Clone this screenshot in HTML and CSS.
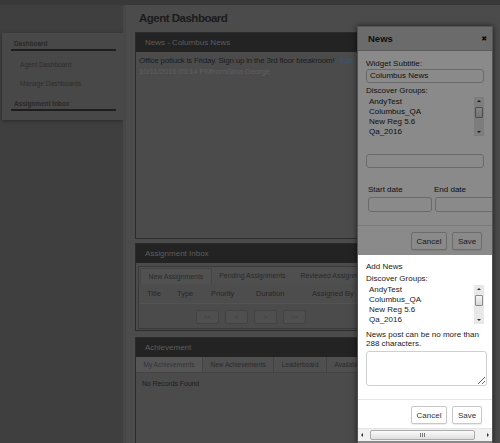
FILE: index.html
```html
<!DOCTYPE html>
<html lang="en">
<head>
  <meta charset="UTF-8" />
  <title>Agent Dashboard</title>
  <link rel="stylesheet" href="styles.css">
</head>
<body>

  <div class="topbar"></div>

  <div class="layout">
    <!-- side menu -->
    <aside class="sidebar">
      <div class="side-heading">Dashboard</div>
      <a class="side-link">Agent Dashboard</a>
      <a class="side-link">Manage Dashboards</a>
      <div class="side-heading">Assignment Inbox</div>
    </aside>

    <!-- dashboard widgets -->
    <main class="main">
      <h1 class="page-title">Agent Dashboard</h1>

      <div class="widget">
        <div class="widget-head">News - Columbus News</div>
        <div class="widget-body news-body">
          <div class="news-line">
            <span>Office potluck is Friday. Sign up in the 3rd floor breakroom!</span>
            <a class="news-edit">Edit</a>
          </div>
          <div class="news-meta">10/11/2016 03:14 PMfromGina George</div>
        </div>
      </div>

      <div class="widget widget-inbox">
        <div class="widget-head">Assignment Inbox</div>
        <div class="widget-body inbox-body">
          <div class="inbox-panel">
            <div class="tabs tabs-inbox">
              <span class="tab is-active">New Assignments</span>
              <span class="tab">Pending Assignments</span>
              <span class="tab">Reviewed Assignments</span>
            </div>
            <div class="table-head">
              <span>Title</span>
              <span>Type</span>
              <span>Priority</span>
              <span>Duration</span>
              <span>Assigned By</span>
            </div>
            <div class="pager">
              <button class="pager-btn">&lt;&lt;</button>
              <button class="pager-btn">&lt;</button>
              <button class="pager-btn">&gt;</button>
              <button class="pager-btn">&gt;&gt;</button>
            </div>
          </div>
        </div>
      </div>

      <div class="widget widget-achv">
        <div class="widget-head">Achievement</div>
        <div class="widget-body achv-body">
          <div class="tabs tabs-achv">
            <span class="tab is-active">My Achievements</span>
            <span class="tab">New Achievements</span>
            <span class="tab">Leaderboard</span>
            <span class="tab">Available Achievements</span>
          </div>
          <p class="empty">No Records Found</p>
        </div>
      </div>
    </main>
  </div>

  <!-- tour overlay dims everything except the focused part -->
  <div class="tour-overlay"></div>

  <!-- News widget settings dialog -->
  <div class="modal">
    <div class="modal-head">
      <span class="modal-title">News</span>
      <span class="modal-close">&#x2716;</span>
    </div>

    <div class="modal-section">
      <div class="field-label">Widget Subtitle:</div>
      <div class="field-input">Columbus News</div>
      <div class="field-label gap-top">Discover Groups:</div>
      <div class="listbox">
        <div>AndyTest</div>
        <div>Columbus_QA</div>
        <div>New Reg 5.6</div>
        <div>Qa_2016</div>
        <div class="vscroll"><i class="up"></i><b class="thumb"></b><i class="down"></i></div>
      </div>
      <div class="field-input blank"></div>
      <div class="date-row">
        <div>
          <div class="field-label">Start date</div>
          <div class="date-input"></div>
        </div>
        <div>
          <div class="field-label">End date</div>
          <div class="date-input"></div>
        </div>
      </div>
    </div>
    <div class="modal-foot">
      <button class="btn btn-cancel">Cancel</button>
      <button class="btn btn-save">Save</button>
    </div>

    <div class="tour-focus">
      <div class="modal-section add-section">
        <div class="field-label">Add News</div>
        <div class="field-label gap-small">Discover Groups:</div>
        <div class="listbox">
          <div>AndyTest</div>
          <div>Columbus_QA</div>
          <div>New Reg 5.6</div>
          <div>Qa_2016</div>
          <div class="vscroll"><i class="up"></i><b class="thumb"></b><i class="down"></i></div>
        </div>
        <p class="note">News post can be no more than 288 characters.</p>
        <textarea class="news-text"></textarea>
      </div>
      <div class="modal-foot">
        <button class="btn btn-cancel">Cancel</button>
        <button class="btn btn-save">Save</button>
      </div>
      <div class="hscroll">
        <i class="left"></i>
        <b class="hthumb"><span class="grip"></span></b>
        <i class="right"></i>
      </div>
    </div>
  </div>

</body>
</html>
```

FILE: styles.css
```css
/* ======= base ======= */
* {
  box-sizing: border-box;
  margin: 0;
  padding: 0;
}
html, body {
  height: 100%;
  overflow: hidden;
}
body {
  font-family: "Liberation Sans", Arial, sans-serif;
  font-size: 8px;
  background: #757575;
  color: #383838;
}
.topbar {
  height: 5px;
  background: #6a6a6a;
}
.layout {
  display: flex;
  align-items: flex-start;
  height: 438px;
}

/* ======= side menu ======= */
.sidebar {
  width: 121px;
  margin: 28px 0 0 2px;
  padding: 6px 7px 9px 9px;
  background: #858585;
  box-shadow: 0 1px 4px rgba(0,0,0,0.35);
}
.side-heading {
  font-size: 6.4px;
  font-weight: bold;
  line-height: 10px;
  padding-left: 3px;
  color: #4e4e4e;
  border-bottom: 2px solid #383838;
}
.side-link {
  display: block;
  padding: 9px 0 0 9px;
  font-size: 6.6px;
  line-height: 10px;
  color: #555;
}
.side-link + .side-heading {
  margin-top: 10px;
}

/* ======= main area ======= */
.main {
  flex: 1;
  align-self: stretch;
  background: #8b8b8b;
  border-left: 3px solid #838383;
  padding-left: 9px;
}
.page-title {
  margin: 6px 0 7px 4px;
  font-size: 11.5px;
  line-height: 14px;
  letter-spacing: -0.5px;
  color: #343434;
}
.widget {
  width: 232px;
  border: 1px solid #505050;
}
.widget-head {
  height: 19px;
  line-height: 19px;
  padding-left: 9px;
  background: #414141;
  color: #a8a8a8;
  font-size: 8px;
}
.widget-body {
  background: #8b8b8b;
}
.news-body {
  height: 186px;
  padding: 3px 13px 0 3px;
  line-height: 11px;
  letter-spacing: -0.2px;
}
.news-line {
  display: flex;
  justify-content: space-between;
  color: #383838;
}
.news-edit {
  color: #6f9cc6;
}
.news-meta {
  color: #ababab;
}

.widget-inbox {
  margin-top: 4px;
}
.inbox-body {
  padding: 3px 2px 1px;
}
.inbox-panel {
  border: 1px solid #6c6c6c;
}
.tabs {
  display: flex;
  white-space: nowrap;
  overflow: hidden;
  background: #929292;
  color: #4e4e4e;
}
.tabs-inbox {
  height: 17px;
  line-height: 17px;
  padding-left: 1px;
  font-size: 6.9px;
}
.tabs-inbox .tab {
  padding: 0 7.5px;
}
.tabs-inbox .is-active {
  background: #979797;
  border: 1px solid #7e7e7e;
  border-bottom: none;
  line-height: 16px;
  margin-top: 1px;
}
.table-head {
  display: grid;
  grid-template-columns: 30px 34px 45px 56px auto;
  height: 20px;
  line-height: 19px;
  padding-left: 8px;
  font-size: 7.5px;
  color: #4a4a4a;
  border-bottom: 1px solid #9a9a9a;
  background: #8f8f8f;
}
.pager {
  display: flex;
  justify-content: center;
  gap: 6px;
  height: 24px;
  padding-top: 6px;
}
.pager-btn {
  width: 23px;
  height: 14px;
  font-family: inherit;
  font-size: 5.5px;
  color: #6a6a6a;
  background: #929292;
  border: 1px solid #7c7c7c;
  border-radius: 2px;
}

.widget-achv {
  margin-top: 6px;
}
.achv-body {
  height: 120px;
}
.tabs-achv {
  height: 16px;
  line-height: 15px;
  font-size: 6.5px;
  border-bottom: 1px solid #7c7c7c;
}
.tabs-achv .tab {
  padding: 0 7.5px;
  border-right: 1px solid #7c7c7c;
}
.tabs-achv .is-active {
  background: #9d9d9d;
  color: #626262;
}
.empty {
  padding: 6px 0 0 6px;
  line-height: 10px;
  font-size: 7px;
  letter-spacing: -0.1px;
  color: #383838;
}

/* ======= tour ======= */
.tour-overlay {
  position: fixed;
  top: 0;
  left: 0;
  right: 0;
  bottom: 0;
  background: rgba(0,0,0,0.46);
  z-index: 10;
}
.tour-focus {
  position: relative;
  z-index: 20;
  background: #fff;
}

/* ======= dialog ======= */
.modal {
  position: absolute;
  left: 357px;
  top: 26px;
  width: 136px;
  height: 420px;
  background: #fff;
  border: 1px solid #9a9a9a;
  box-shadow: 0 0 6px rgba(0,0,0,0.6);
  overflow: hidden;
  color: #222;
}
.modal-head {
  display: flex;
  align-items: center;
  justify-content: space-between;
  height: 24px;
  padding: 0 5px 0 10px;
  background: #c6c6c6;
  border-bottom: 1px solid #a8a8a8;
}
.modal-title {
  font-size: 9.5px;
  font-weight: bold;
  color: #1a1a1a;
}
.modal-close {
  font-family: "DejaVu Sans", sans-serif;
  font-size: 7px;
  color: #1a1a1a;
}
.modal-section {
  padding: 8px 8px 13px;
}
.field-label {
  line-height: 10px;
  font-size: 8px;
}
.gap-top {
  margin-top: 3px;
}
.gap-small {
  margin-top: 2px;
}
.field-input {
  width: 118px;
  height: 14px;
  line-height: 12px;
  padding: 0 3px;
  border: 1px solid #c4c4c4;
  border-radius: 3px;
}
.field-input.blank {
  margin-top: 18px;
}
.listbox {
  position: relative;
  width: 118px;
  height: 40px;
  padding: 1px 0 0 3px;
  line-height: 10px;
}
.vscroll {
  position: absolute;
  top: 1px;
  right: 0;
  bottom: 0;
  width: 10px;
  background: #e8e8e8;
}
.vscroll .up,
.vscroll .down {
  position: absolute;
  left: 3px;
  width: 0;
  height: 0;
  border-left: 2px solid transparent;
  border-right: 2px solid transparent;
}
.vscroll .up {
  top: 3px;
  border-bottom: 2px solid #333;
}
.vscroll .down {
  bottom: 3px;
  border-top: 2px solid #333;
}
.vscroll .thumb {
  position: absolute;
  top: 10px;
  left: 1px;
  width: 8px;
  height: 11px;
  border: 1px solid #8c8c8c;
  border-radius: 1px;
  background: linear-gradient(#f6f6f6, #d6d6d6);
}
.date-row {
  display: grid;
  grid-template-columns: 66px 66px;
  margin-top: 17px;
  padding-left: 2px;
}
.date-input {
  width: 64px;
  height: 15px;
  margin-top: 2px;
  border: 1px solid #c4c4c4;
  border-radius: 3px;
}
.date-row > div + div .date-input {
  width: 65px;
  margin-left: 1px;
}
.modal-foot {
  display: flex;
  justify-content: flex-end;
  gap: 5px;
  padding: 6px 10px 5px;
  border-top: 1px solid #e5e5e5;
}
.btn {
  height: 18px;
  font-family: inherit;
  font-size: 8px;
  color: #333;
  background: #fff;
  border: 1px solid #c8c8c8;
  border-radius: 2px;
  box-shadow: 0 1px 1px rgba(0,0,0,0.08);
}
.btn-cancel {
  width: 36px;
}
.btn-save {
  width: 30px;
}
.add-section {
  padding: 7px 8px 13px;
}
.note {
  margin-top: 6px;
  line-height: 9px;
}
.news-text {
  display: block;
  width: 121px;
  height: 35px;
  margin-top: 3px;
  border: 1px solid #cfcfcf;
  border-radius: 3px;
}
.add-section + .modal-foot {
  padding-bottom: 4px;
}
.hscroll {
  display: flex;
  align-items: center;
  height: 13px;
  padding: 0 3px;
  background: #f0f0f0;
  border-top: 1px solid #e4e4e4;
}
.hscroll .left,
.hscroll .right {
  width: 0;
  height: 0;
  border-top: 2px solid transparent;
  border-bottom: 2px solid transparent;
}
.hscroll .left {
  border-right: 2px solid #333;
}
.hscroll .right {
  margin-left: auto;
  border-left: 2px solid #333;
}
.hthumb {
  display: flex;
  align-items: center;
  justify-content: center;
  width: 105px;
  height: 10px;
  margin-left: 7px;
  border: 1px solid #ababab;
  border-radius: 2px;
  background: linear-gradient(#fbfbfb, #dedede);
}
.grip {
  width: 5px;
  height: 4px;
  background: repeating-linear-gradient(90deg, #777 0 1px, transparent 1px 2px);
}
```
